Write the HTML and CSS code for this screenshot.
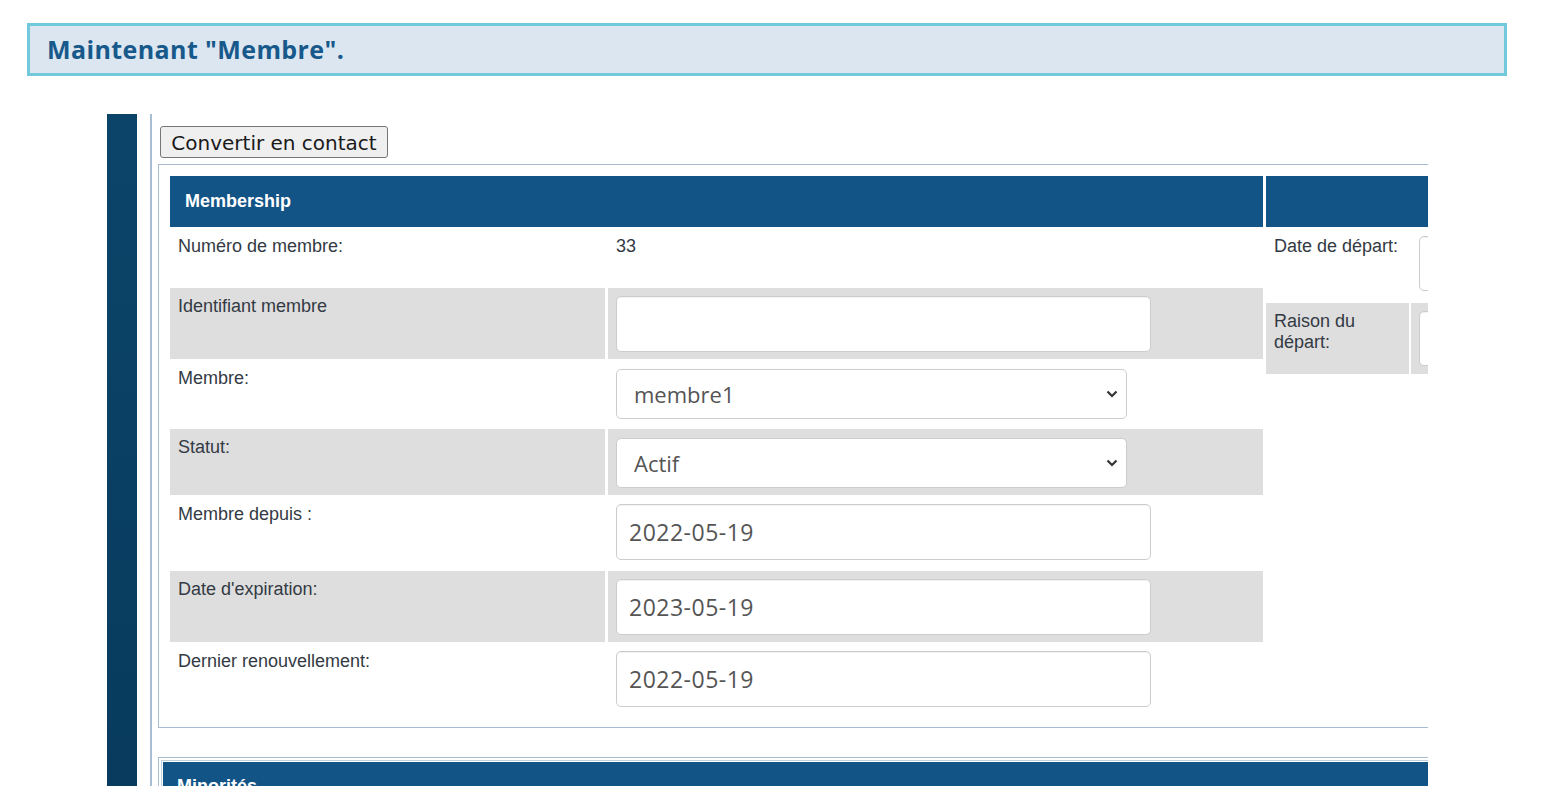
FILE: index.html
```html
<!DOCTYPE html>
<html lang="fr">
<head>
<meta charset="utf-8">
<title>Maintenant "Membre".</title>
<link rel="stylesheet" href="styles.css">
</head>
<body>
<div class="banner"><h1 class="banner-title">Maintenant "Membre".</h1></div>
<div class="shot">
  <div class="sidebar"></div>
  <div class="rule"></div>
  <div class="main">
    <button class="btn" type="button">Convertir en contact</button>
    <div class="panel">
      <div class="tables">
        <div class="tbl tbl-left">
          <div class="th th-span">Membership</div>
          <div class="td label">Numéro de membre:</div>
          <div class="td value">33</div>
          <div class="td label grey">Identifiant membre</div>
          <div class="td field grey"><input class="inp" type="text" value=""></div>
          <div class="td label">Membre:</div>
          <div class="td field sel-cell">
            <div class="sel-wrap">
              <select class="sel"><option>membre1</option></select>
              <svg class="chev" width="12" height="8" viewBox="0 0 12 8"><path d="M1.5 1.5 L6 6 L10.5 1.5" fill="none" stroke="#333" stroke-width="2.2"/></svg>
            </div>
          </div>
          <div class="td label grey">Statut:</div>
          <div class="td field grey sel-cell">
            <div class="sel-wrap">
              <select class="sel"><option>Actif</option></select>
              <svg class="chev" width="12" height="8" viewBox="0 0 12 8"><path d="M1.5 1.5 L6 6 L10.5 1.5" fill="none" stroke="#333" stroke-width="2.2"/></svg>
            </div>
          </div>
          <div class="td label">Membre depuis :</div>
          <div class="td field"><input class="inp" type="text" value="2022-05-19"></div>
          <div class="td label grey">Date d'expiration:</div>
          <div class="td field grey"><input class="inp" type="text" value="2023-05-19"></div>
          <div class="td label">Dernier renouvellement:</div>
          <div class="td field"><input class="inp" type="text" value="2022-05-19"></div>
        </div>
        <div class="tbl tbl-right">
          <div class="th th-span"></div>
          <div class="td label">Date de départ:</div>
          <div class="td field"><input class="inp inp-r" type="text" value=""></div>
          <div class="td label grey">Raison du départ:</div>
          <div class="td field grey"><input class="inp inp-r" type="text" value=""></div>
        </div>
      </div>
    </div>
    <div class="panel panel2">
      <div class="inner2">
        <div class="th th2">Minorités</div>
      </div>
    </div>
  </div>
</div>
</body>
</html>
```
FILE: styles.css
```css
* { box-sizing: border-box; }
html, body { margin: 0; padding: 0; background: #fff; }
body { width: 1550px; height: 812px; overflow: hidden; font-family: "Liberation Sans", Arial, sans-serif; }

.banner {
  margin: 23px 0 0 27px;
  width: 1480px;
  height: 53px;
  border: 3px solid #72c9dc;
  background: #dce6f0;
  display: flex;
  align-items: center;
  padding-left: 17px;
  padding-bottom: 2px;
}
.banner-title {
  margin: 0;
  font-family: "Open Sans", sans-serif;
  font-weight: 700;
  font-size: 25px;
  color: #17598b;
  letter-spacing: 0.4px;
}

.shot {
  margin: 38px 0 0 107px;
  width: 1321px;
  height: 672px;
  overflow: hidden;
  display: flex;
}
.sidebar {
  flex: 0 0 30px;
  background: linear-gradient(#0b4469, #083b5e);
}
.rule {
  flex: 0 0 2px;
  margin-left: 13px;
  background: #a9bdd3;
}
.main {
  flex: 0 0 auto;
  margin-left: 6px;
  width: 1500px;
}

.btn {
  display: block;
  margin: 12px 0 0 2px;
  width: 228px;
  height: 32px;
  padding: 2px 0 0 0;
  font-family: "DejaVu Sans", Verdana, sans-serif;
  font-size: 20px;
  color: #1a1a1a;
  background: #efefef;
  border: 1px solid #767676;
  border-radius: 3px;
}

.panel {
  margin-top: 6px;
  border: 1px solid #a7bbd3;
  padding: 11px 11px 9px 11px;
  width: 1500px;
}
.tables {
  display: flex;
  align-items: flex-start;
  gap: 3px;
}
.tbl { display: grid; row-gap: 1px; }
.tbl-left {
  grid-template-columns: 435px 655px;
  grid-template-rows: 51px 59px 71px 68px 66px 74px 71px 75px;
  column-gap: 3px;
}
.tbl-right {
  grid-template-columns: 143px 300px;
  grid-template-rows: 51px 74px 71px;
  column-gap: 2px;
}
.th {
  background: #135487;
  color: #fff;
  font-weight: 700;
  font-size: 18px;
  display: flex;
  align-items: center;
  padding-left: 15px;
  height: 51px;
}
.th-span { grid-column: 1 / -1; }

.td { font-size: 18px; color: #333a44; line-height: 21px; }
.grey { background: #dedede; }
.label { padding: 8px 8px 0 8px; }
.value { padding: 8px 8px 0 8px; }
.field { padding: 8px 0 0 8px; }
.sel-cell { padding-top: 9px; }

.inp {
  display: block;
  width: 535px;
  height: 56px;
  border: 1px solid #cccccc;
  border-radius: 5px;
  background: #fff;
  padding: 0 12px;
  font-family: "Open Sans", sans-serif;
  font-size: 23px;
  letter-spacing: 0.5px;
  color: #555;
  box-shadow: inset 0 1px 1px rgba(0,0,0,0.06);
}
.inp-r { width: 300px; height: 55px; }

.sel-wrap { position: relative; width: 511px; }
.sel {
  display: block;
  width: 511px;
  height: 50px;
  -webkit-appearance: none;
  appearance: none;
  border: 1px solid #cccccc;
  border-radius: 5px;
  background: #fff;
  padding: 0 17px;
  font-family: "Open Sans", sans-serif;
  font-size: 22px;
  color: #555;
}
.chev { position: absolute; right: 9px; top: 21px; pointer-events: none; }

.panel2 {
  margin-top: 29px;
  padding: 2px;
}
.inner2 {
  border: 1px solid #c3d0e0;
  padding: 1px;
}
.th2 { padding-left: 14px; align-items: flex-start; padding-top: 14px; }
```
